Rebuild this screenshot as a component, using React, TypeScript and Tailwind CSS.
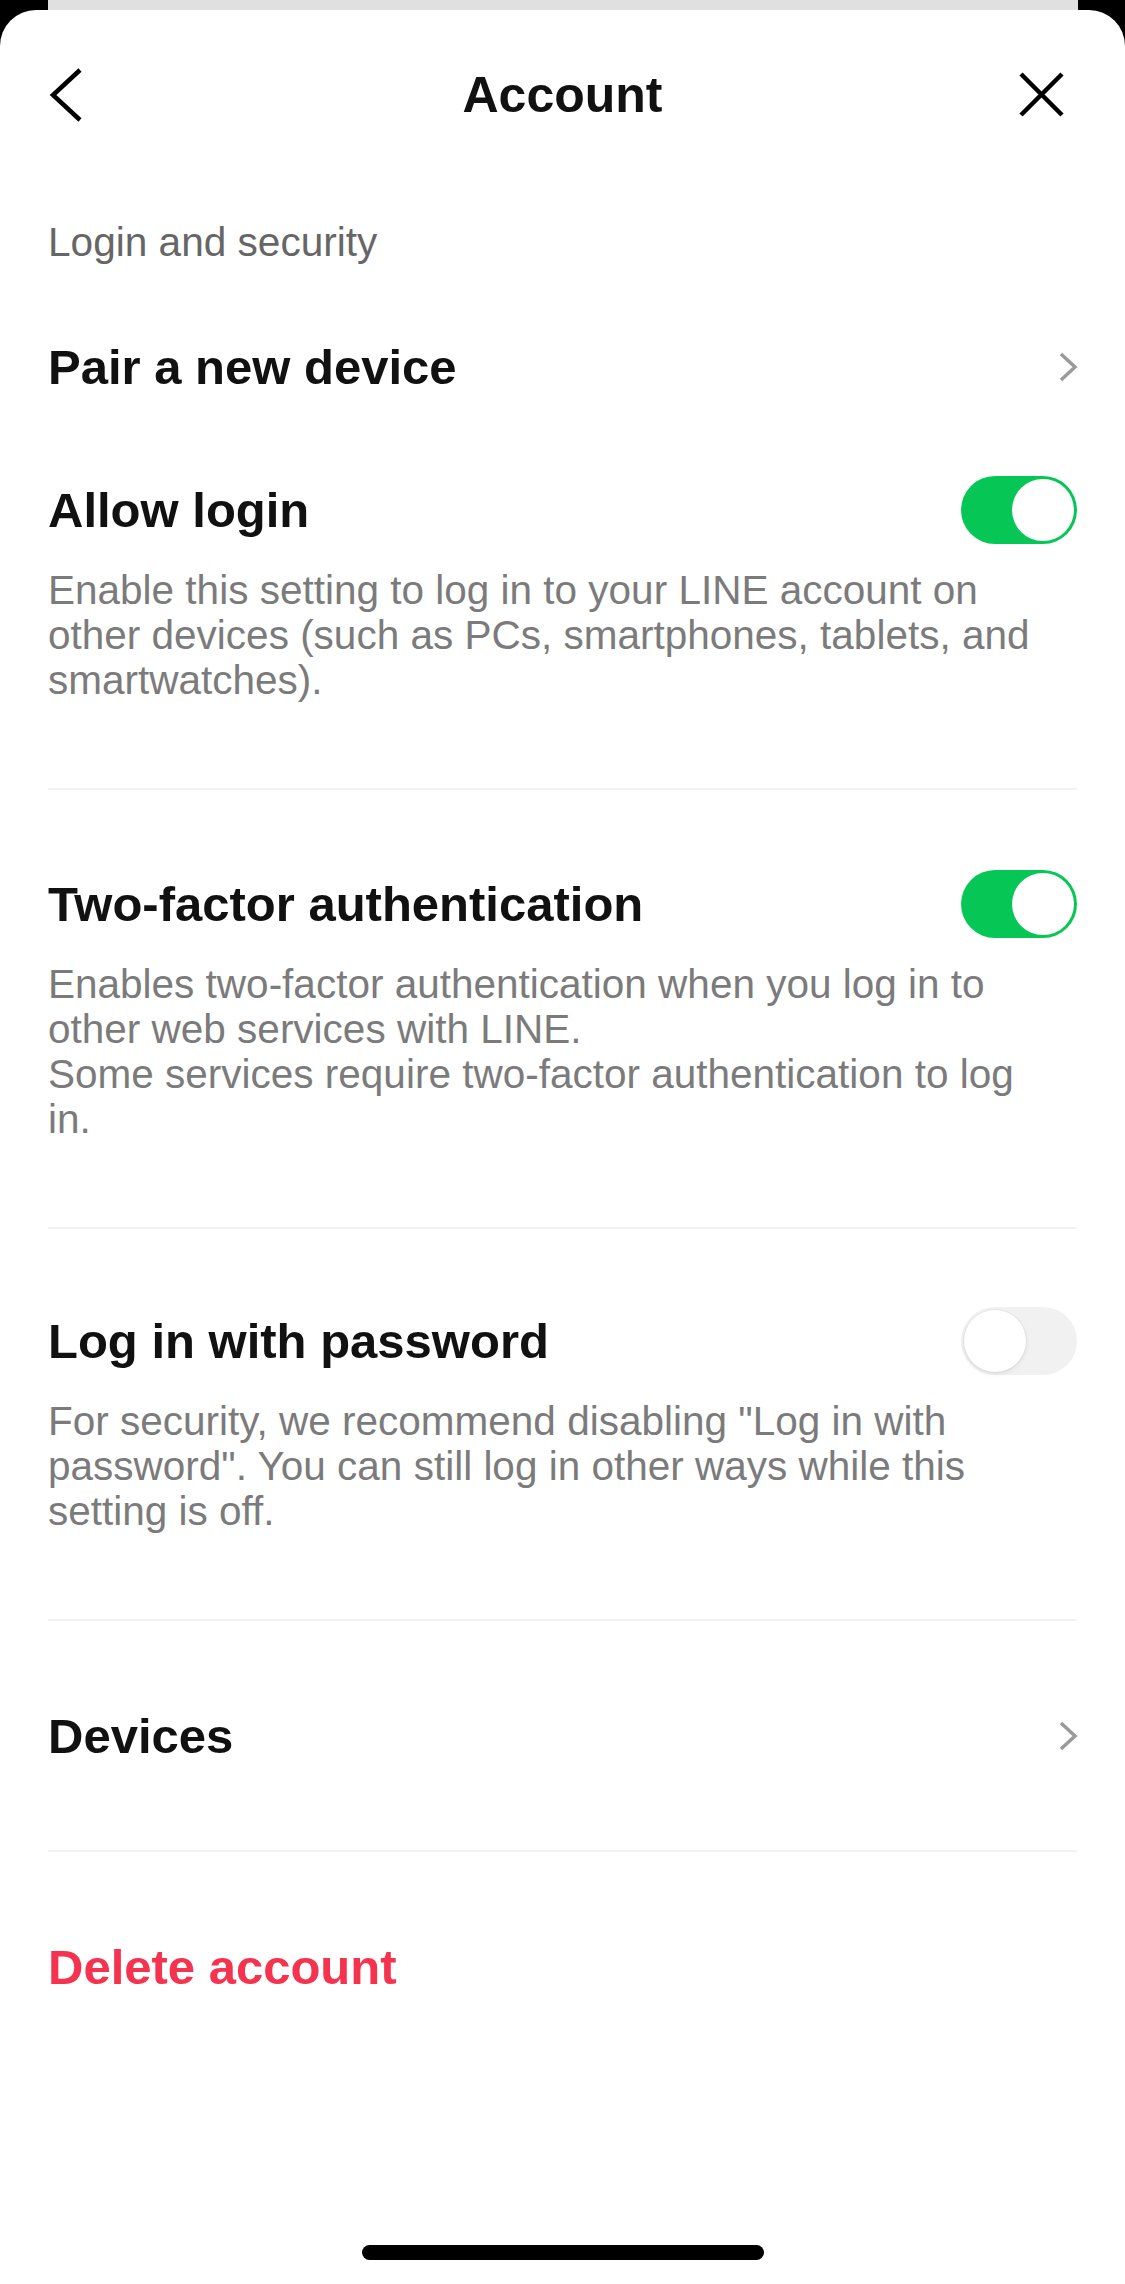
import React from 'react';

function Toggle({ on }: { on: boolean }) {
  if (on) {
    return (
      <div className="w-[116px] h-[68px] rounded-full bg-[#06c755] p-[3px] flex justify-end shrink-0">
        <div className="w-[62px] h-[62px] rounded-full bg-white" />
      </div>
    );
  }
  return (
    <div className="w-[116px] h-[68px] rounded-full bg-[#f1f1f1] p-[3px] flex justify-start shrink-0">
      <div className="w-[62px] h-[62px] rounded-full bg-white shadow-[0_0_0_1px_rgba(0,0,0,0.04),0_2px_5px_rgba(0,0,0,0.08)]" />
    </div>
  );
}

function Chevron() {
  return (
    <svg width="20" height="36" viewBox="0 0 20 36" className="shrink-0 overflow-visible">
      <polyline points="4,5 18,18 4,31" fill="none" stroke="#9a9a9a" strokeWidth="3.5" />
    </svg>
  );
}

function Divider() {
  return <div className="mx-[48px] h-[2px] bg-[#f2f2f2]" />;
}

interface SettingProps {
  title: string;
  lines: string[];
  on: boolean;
  topPad: string;
}

function Setting({ title, lines, on, topPad }: SettingProps) {
  return (
    <div className={`px-[48px] pb-[85px] ${topPad}`}>
      <div className="flex items-center justify-between h-[60px]">
        <div className="text-[49px] leading-[60px] font-bold text-[#111]">{title}</div>
        <Toggle on={on} />
      </div>
      <div className="mt-[28px] text-[40.5px] leading-[45px] text-[#7b7b7b]">
        {lines.map((l, i) => (
          <div key={i} className="whitespace-nowrap">{l}</div>
        ))}
      </div>
    </div>
  );
}

function LinkRow({ title, height }: { title: string; height: string }) {
  return (
    <div className={`px-[48px] flex items-center justify-between ${height}`}>
      <div className="text-[49px] leading-[60px] font-bold text-[#111]">{title}</div>
      <Chevron />
    </div>
  );
}

export default function App() {
  return (
    <div className="h-[2284px] bg-black flex flex-col font-['Liberation_Sans',Arial,sans-serif]">
      {/* card behind the sheet */}
      <div className="h-[10px] w-[1030px] mx-auto bg-[#e0e0e0] shrink-0" />

      <div className="flex-1 bg-white rounded-t-[36px] flex flex-col">
        {/* header */}
        <div className="h-[170px] grid grid-cols-[120px_1fr_120px] items-center">
          <div className="flex">
            <svg width="60" height="60" viewBox="0 0 60 60" className="ml-[38px]">
              <polyline points="42,5 15,30 42,55" fill="none" stroke="#000" strokeWidth="4.5" />
            </svg>
          </div>
          <div className="text-center text-[50px] leading-[60px] font-bold text-[#111]">Account</div>
          <div className="flex justify-end">
            <svg width="60" height="60" viewBox="0 0 60 60" className="mr-[54px]">
              <path d="M10 9 L51 50 M51 9 L10 50" fill="none" stroke="#000" strokeWidth="4.5" />
            </svg>
          </div>
        </div>

        <div className="px-[48px] pt-[38px] text-[40.6px] leading-[48px] text-[#666]">Login and security</div>

        <LinkRow title="Pair a new device" height="h-[202px]" />

        <Setting
          title="Allow login"
          on={true}
          topPad="pt-[12px]"
          lines={[
            'Enable this setting to log in to your LINE account on',
            'other devices (such as PCs, smartphones, tablets, and',
            'smartwatches).',
          ]}
        />
        <Divider />

        <Setting
          title="Two-factor authentication"
          on={true}
          topPad="pt-[84px]"
          lines={[
            'Enables two-factor authentication when you log in to',
            'other web services with LINE.',
            'Some services require two-factor authentication to log',
            'in.',
          ]}
        />
        <Divider />

        <Setting
          title="Log in with password"
          on={false}
          topPad="pt-[82px]"
          lines={[
            'For security, we recommend disabling "Log in with',
            'password". You can still log in other ways while this',
            'setting is off.',
          ]}
        />
        <Divider />

        <LinkRow title="Devices" height="h-[229px]" />
        <Divider />

        <div className="px-[48px] pt-[85px]">
          <div className="text-[49px] leading-[60px] font-bold text-[#f5334f]">Delete account</div>
        </div>

        <div className="flex-1" />
        <div className="w-[402px] h-[15px] rounded-full bg-black mx-auto mb-[24px]" />
      </div>
    </div>
  );
}
